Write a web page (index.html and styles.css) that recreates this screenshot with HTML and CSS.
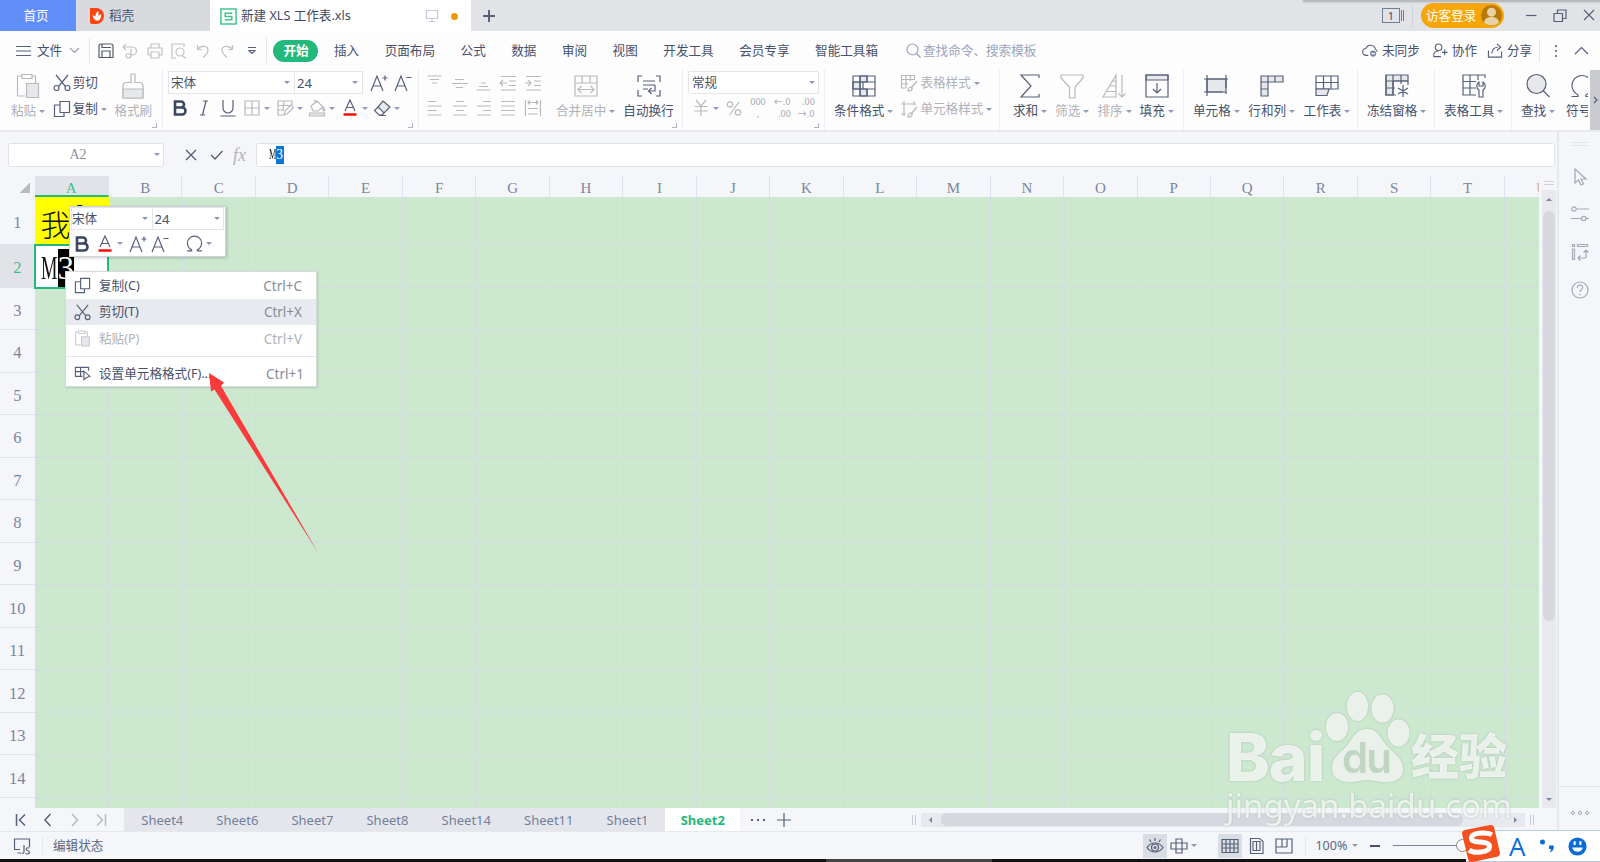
FILE: index.html
```html
<!DOCTYPE html>
<html lang="zh-CN">

<head>
    <meta charset="UTF-8">
    <meta name="viewport" content="width=device-width, initial-scale=1.0">
    <title>新建 XLS 工作表.xls</title>
    <link rel="stylesheet" href="styles.css">
</head>

<body>

    <!-- shared icons -->
    <svg class="sprite">
        <symbol id="cut" viewBox="0 0 18 18">
            <path d="M3 1l9.5 11.5M15 1L5.500 12.500" />
            <circle cx="3.500" cy="14" r="2.500" />
            <circle cx="14.500" cy="14" r="2.500" />
        </symbol>
        <symbol id="copy" viewBox="0 0 18 18">
            <path d="M7 1.500h9.500v11H7zM7 5H1.500v11.500H11v-4" />
        </symbol>
        <symbol id="paste" viewBox="0 0 24 26">
            <path d="M9 23H1.500V3H6m10 0h3.500v7M6 1.500h10v4H6z" />
            <path class="tint" d="M10.500 10.500h12v14h-12z" />
        </symbol>
        <symbol id="font-up" viewBox="0 0 18 18">
            <path d="M1 17L7 2l6 15M3 12h8M12.500 4h5M15 1.500v5" />
        </symbol>
        <symbol id="font-down" viewBox="0 0 18 18">
            <path d="M1 17L7 2l6 15M3 12h8M12.500 3.500h5" />
        </symbol>
        <symbol id="font-color" viewBox="0 0 16 18">
            <path d="M3 12L8 1l5 11M4.500 8.500h7" />
            <path class="red" d="M1.500 15.500h13" />
        </symbol>
        <symbol id="omega" viewBox="0 0 24 24">
            <path d="M1.500 22.500h6.500v-1.500C4 18.500 2 15.500 2 11.500a10 10 0 0 1 20 0c0 4-2 7-6 9.500v1.500h6.500" />
        </symbol>
    </svg>

    <div class="titlebar">
        <div class="tab home">首页</div>
        <div class="tab docer">
            <svg class="docer-logo" viewBox="0 0 14 16">
                <path d="M0 0h6a8 8 0 0 1 0 16H2a2 2 0 0 1-2-2z" fill="#fb4310" />
                <path d="M7.500 13C4 12 3 10 2.500 7l3 1.500C5 6 6.500 4 8.500 3v5l2.500-2c.5 3-.5 6-3.500 7z" fill="#fff" />
            </svg>
            <span>稻壳</span>
        </div>
        <div class="tab file">
            <svg class="xls-logo" viewBox="0 0 18 18">
                <path d="M1 1h16v16H1zM13 5.500H5.500V9h7v3.500H5" fill="none" stroke="#43c58b" stroke-width="1.600" />
            </svg>
            <span class="name">新建 XLS 工作表.xls</span>
            <svg class="icon monitor" viewBox="0 0 14 14"><path d="M1.500 1.500h11v8h-11zM7 9.500V12M4 12.500h6" /></svg>
            <i class="unsaved"></i>
        </div>
        <svg class="icon new-tab" viewBox="0 0 12 12"><path d="M6 0v12M0 6h12" /></svg>
        <div class="window-tools">
            <div class="doc-count"><span>1</span><i></i><i></i></div>
            <div class="login">
                <span>访客登录</span>
                <svg viewBox="0 0 22 22">
                    <circle cx="11" cy="11" r="11" fill="#b57a08" />
                    <circle cx="11" cy="7.500" r="4.700" fill="#e9d3a5" />
                    <path d="M3 18c1-4 4-5.500 8-5.500s7 1.500 8 5.500a11 11 0 0 1-16 0z" fill="#e9d3a5" />
                </svg>
            </div>
            <svg class="icon win" viewBox="0 0 14 14"><path d="M2 6.500h10.500" /></svg>
            <svg class="icon win" viewBox="0 0 14 14"><path d="M1 4.500h8.500v8H1zM4.500 4.500V1H13v8.500H9.500" /></svg>
            <svg class="icon win" viewBox="0 0 14 14"><path d="M2 1l10 10M12 1L2 11" /></svg>
        </div>
        <div class="top-shadow"></div>
    </div>

    <div class="menubar">
        <div class="file-menu">
            <svg class="icon burger" viewBox="0 0 15 12"><path d="M0 1.500h15M0 6h15M0 10.500h15" /></svg>
            <span>文件</span>
            <svg class="icon chevron" viewBox="0 0 11 7"><path d="M1 1l4.500 4.500L10 1" /></svg>
        </div>
        <div class="quick">
            <svg class="icon dark" viewBox="0 0 16 16"><path d="M1 14.500V3q0-2 2-2h10q2 0 2 2v11.500zM4 14.500V8h8v6.500M4 1v3.500h9" /></svg>
            <svg class="icon" viewBox="0 0 16 16"><path d="M1 4h9.500a4 4 0 0 1 0 8H9M4 1L1 4l3 3M9 6v7c0 1-1 2-2.500 2S4 14 4 12.500 5 11 9 11" /></svg>
            <svg class="icon" viewBox="0 0 16 16"><path d="M4 5V1h8v4M3.500 12H1V5h14v7h-2.500M4 9h8v6H4z" /></svg>
            <svg class="icon" viewBox="0 0 16 16"><path d="M5 15H1V1h12v3M11 12.500l4 3" /><circle cx="9" cy="9" r="4" /></svg>
            <svg class="icon" viewBox="0 0 16 16"><path d="M2.500 2v4.500H7M2.500 6.500C6 2 13 2.500 13 7.500c0 3-2.500 4.500-5 7" /></svg>
            <svg class="icon" viewBox="0 0 16 16"><path d="M13.500 2v4.500H9M13.500 6.500C10 2 3 2.500 3 7.500c0 3 2.500 4.500 5 7" /></svg>
        </div>
        <svg class="icon more" viewBox="0 0 8 9"><path d="M0 1.500h8M1 4.500l3 3 3-3z" /></svg>
        <div class="menu">
            <span class="active">开始</span>
            <span>插入</span>
            <span>页面布局</span>
            <span>公式</span>
            <span>数据</span>
            <span>审阅</span>
            <span>视图</span>
            <span>开发工具</span>
            <span>会员专享</span>
            <span>智能工具箱</span>
        </div>
        <div class="search">
            <svg class="icon" viewBox="0 0 15 15"><circle cx="6.500" cy="6.500" r="5.500" /><path d="M10.500 10.500l4 4" /></svg>
            <span>查找命令、搜索模板</span>
        </div>
        <div class="share">
            <svg class="icon" viewBox="0 0 18 16"><path d="M7 13.500H5a4 4 0 0 1-.5-8 5.500 5.500 0 0 1 10.500 1c1.500.5 2 1.500 2 3" /><circle class="solid" cx="12.500" cy="11.500" r="3.500" /><path class="white" d="M10.500 11.500h4" /></svg>
            <span>未同步</span>
            <svg class="icon collab" viewBox="0 0 16 16"><circle cx="6.500" cy="4.500" r="3.500" /><path d="M9 14.500H1.500c-1-3.500 1-6 5-6M13 7v6M10 10h6" /></svg>
            <span>协作</span>
            <svg class="icon out" viewBox="0 0 16 16"><path d="M1 8v7h14V9M4.500 11C5 7 7 4.500 11 4.500M10 1l4 3.500L10 8" /></svg>
            <span>分享</span>
        </div>
        <div class="dots-v"><i></i><i></i><i></i></div>
        <svg class="icon collapse" viewBox="0 0 15 9"><path d="M1 8l6.500-6.500L14 8" /></svg>
    </div>

    <div class="ribbon">
        <div class="group clipboard">
            <div class="big off">
                <svg class="icon" viewBox="0 0 24 26"><use href="#paste" /></svg>
                <span class="drop">粘贴</span>
            </div>
            <div class="stack">
                <div class="small"><svg class="icon" viewBox="0 0 18 18"><use href="#cut" /></svg><span>剪切</span></div>
                <div class="small"><svg class="icon" viewBox="0 0 18 18"><use href="#copy" /></svg><span class="drop">复制</span></div>
            </div>
            <div class="big off">
                <svg class="icon" viewBox="0 0 24 26"><path d="M10 1h4v8.500h5q3 0 3 4V25H2V13.500q0-4 3-4h5z" /><path class="tint" d="M2 16h20v9H2z" /></svg>
                <span>格式刷</span>
            </div>
            <i class="corner"></i>
        </div>

        <div class="group font">
            <div class="row">
                <div class="select family">宋体</div>
                <div class="select size">24</div>
                <svg class="icon" viewBox="0 0 18 18"><use href="#font-up" /></svg>
                <svg class="icon" viewBox="0 0 18 18"><use href="#font-down" /></svg>
            </div>
            <div class="row marks">
                <svg class="icon bold" viewBox="0 0 18 18"><path d="M4 2.500h6a3 3 0 0 1 0 6H4zM4 8.500h7a3.300 3.300 0 0 1 0 7H4z" /></svg>
                <svg class="icon" viewBox="0 0 18 18"><path d="M8 2h5M5 16h5M11 2L7.500 16" /></svg>
                <svg class="icon" viewBox="0 0 18 18"><path d="M4 1v8a5 5 0 0 0 10 0V1M1.500 17h15" /></svg>
                <span class="drop off"><svg class="icon" viewBox="0 0 18 18"><path d="M2 2h14v14H2zM9 2v14M2 9h14" /></svg></span>
                <span class="drop off"><svg class="icon" viewBox="0 0 18 18"><path d="M7 16H2V2h14v4M2 6.500h14M2 11h6M8 2l-1 9M8 16l1-4 6-6 2.500 2.500-6 6z" /></svg></span>
                <span class="drop off"><svg class="icon" viewBox="0 0 18 18"><path d="M3 7l6-5 6 6-5 4H5zM6 1l3 3M15 8c2 2 2 4 1 4s-1.500-2-1-4" /><path class="tint" d="M1.500 14h15v3h-15z" /></svg></span>
                <span class="drop"><svg class="icon" viewBox="0 0 16 18"><use href="#font-color" /></svg></span>
                <span class="drop"><svg class="icon" viewBox="0 0 18 18"><path class="tint" d="M10 2l7 6-6 6-6-6z" /><path d="M5 8l-3.500 3.500L6 16h3l2-2M6 16.500h7" /></svg></span>
            </div>
            <i class="corner"></i>
        </div>

        <div class="group align">
            <div class="align-grid off">
                <svg class="icon" viewBox="0 0 18 18"><path d="M1.500 2h14M4 5.500h9M6 9h5" /></svg>
                <svg class="icon" viewBox="0 0 18 18"><path d="M4 5.500h9M1 9.500h16M5 13.500h7" /></svg>
                <svg class="icon" viewBox="0 0 18 18"><path d="M6 9h5M4 12.500h9M1.500 16h14" /></svg>
                <svg class="icon" viewBox="0 0 18 18"><path d="M2 2.500h15M10 7h7M10 11.500h7M2 16h15M1 9h7M4 6L1 9l3 3" /></svg>
                <svg class="icon" viewBox="0 0 18 18"><path d="M2 2.500h15M10 7h7M10 11.500h7M2 16h15M1 9h6M4 6l3 3-3 3" /></svg>
                <svg class="icon" viewBox="0 0 18 18"><path d="M1.500 2.500h9M1.500 7h14M1.500 11.500h9M1.500 16h14" /></svg>
                <svg class="icon" viewBox="0 0 18 18"><path d="M5 2.500h8M2 7h14M5 11.500h8M2 16h14" /></svg>
                <svg class="icon" viewBox="0 0 18 18"><path d="M8 2.500h8M2 7h14M8 11.500h8M2 16h14" /></svg>
                <svg class="icon" viewBox="0 0 18 18"><path d="M2 2.500h14M2 7h14M2 11.500h14M2 16h14" /></svg>
                <svg class="icon" viewBox="0 0 18 18"><path d="M1.500 1v16M16.500 1v16M4 3.500h10M6 1.500l-2 2 2 2M12 1.500l2 2-2 2M4 9.500h10M4 15h10" /></svg>
            </div>
            <div class="big off">
                <svg class="icon" viewBox="0 0 24 26"><path d="M1 3h22v20H1zM1 10h22M8 3v7M16 3v7M4 16.500h16M7.500 13L4 16.500 7.500 20M16.500 13l3.500 3.500-3.500 3.500" /></svg>
                <span class="drop">合并居中</span>
            </div>
            <div class="big wrap">
                <svg class="icon" viewBox="0 0 24 26"><path d="M5 3H1v6M19 3h4v6M5 23H1v-6M19 23h4v-6M6 8h12M6 12h12M6 16h5M18 12v6h-6M14.500 15l-3 3 3 3" /></svg>
                <span>自动换行</span>
            </div>
            <i class="corner"></i>
        </div>

        <div class="group number">
            <div class="select format">常规</div>
            <div class="row off">
                <span class="drop"><svg class="icon" viewBox="0 0 18 18"><path d="M4 1l5 6 5-6M2.500 7.500h13M2.500 12h13M9 7v10" /></svg></span>
                <svg class="icon" viewBox="0 0 18 18"><circle cx="5" cy="5.500" r="2.700" /><circle cx="13" cy="13.500" r="2.700" /><path d="M14 3L4.500 16" /></svg>
                <div class="digits"><b>000</b><b>,</b></div>
                <div class="digits"><b>←.0</b><b class="end">.00</b></div>
                <div class="digits"><b class="end">.00</b><b>→.0</b></div>
            </div>
            <i class="corner"></i>
        </div>

        <div class="group styles">
            <div class="big">
                <svg class="icon" viewBox="0 0 24 26"><path class="tint" d="M8 3h7v6H8zM1 9h7v7H1zM8 16h7v7H8z" /><path d="M1 3h22v20H1zM1 9h22M1 16h22M8 3v13M15 16v7M15 3v6M11 9v7M8 16v7" /></svg>
                <span class="drop">条件格式</span>
            </div>
            <div class="stack off">
                <div class="small"><svg class="icon" viewBox="0 0 18 18"><path d="M6 14H1.500V1.500h13V6M1.500 5.500h13M1.500 10H8M6 1.500V14M10.500 1.500V7M17 7l-6 7M8 17c0-3 1-4 3-4s2 4-3 4z" /></svg><span class="drop">表格样式</span></div>
                <div class="small"><svg class="icon" viewBox="0 0 18 18"><path d="M4 1v15M1 4h15M1 14h5M14 1v4M17 7l-6 7M8 17c0-3 1-4 3-4s2 4-3 4z" /></svg><span class="drop">单元格样式</span></div>
            </div>
        </div>

        <div class="group edit">
            <div class="big">
                <svg class="icon" viewBox="0 0 24 26"><path d="M21 5V2H3l10 11L3 24h18v-3" /></svg>
                <span class="drop">求和</span>
            </div>
            <div class="big off">
                <svg class="icon" viewBox="0 0 24 26"><path d="M1 2h22v3l-8 9v11H9.500V14L1 5z" /></svg>
                <span class="drop">筛选</span>
            </div>
            <div class="big off">
                <svg class="icon" viewBox="0 0 24 26"><path d="M14 2v22H1zM14 8h-3.500M14 13H8M14 18.500H5M20 2v22M16.500 20.500L20 24l3.500-3.500" /></svg>
                <span class="drop">排序</span>
            </div>
            <div class="big">
                <svg class="icon" viewBox="0 0 24 26"><path class="tint" d="M1 2h22v5H1z" /><path d="M1 2h22v22H1zM12 10v10M8 16l4 4 4-4" /></svg>
                <span class="drop">填充</span>
            </div>
        </div>

        <div class="group cells">
            <div class="big">
                <svg class="icon" viewBox="0 0 24 26"><path class="tint" d="M3 6h19v13H3z" /><path d="M3 2v21M22 2v13M0 6h24M0 19h19M22 19v2" /></svg>
                <span class="drop">单元格</span>
            </div>
            <div class="big">
                <svg class="icon" viewBox="0 0 24 26"><path class="tint" d="M1 3h22v6H8v14H1z" /><path d="M8 3v6H1M15 3v6M1 16h7" /></svg>
                <span class="drop">行和列</span>
            </div>
            <div class="big">
                <svg class="icon" viewBox="0 0 24 26"><path d="M1 3h22v13H1zM1 9.500h22M8.500 3v13M16 3v13" /><path class="tint" d="M1 16h13l-2 6.500H1z" /></svg>
                <span class="drop">工作表</span>
            </div>
        </div>

        <div class="group freeze">
            <div class="big">
                <svg class="icon" viewBox="0 0 24 26"><path class="tint" d="M1 2h22v6H8v14H1z" /><path d="M23 8v4M11 22H1V2M8 2v20M16 2v9M1 8h22M1 15h9M18 12v12M13 15l10 6M23 15l-10 6" /></svg>
                <span class="drop">冻结窗格</span>
            </div>
        </div>
        <div class="group freeze">
            <div class="big">
                <svg class="icon" viewBox="0 0 24 26"><path d="M14 22H1V2h22v3M8 2v20M16 2v5M1 8.500h13M1 15h13M17 24v-7c-3-2-3-6 0-8v4h4V9c3 2 3 6 0 8v7z" /></svg>
                <span class="drop">表格工具</span>
            </div>
        </div>
        <div class="group find">
            <div class="big">
                <svg class="icon" viewBox="0 0 24 26"><circle class="tint" cx="10.500" cy="11" r="9.500" /><path d="M17.500 18l6 6" /></svg>
                <span class="drop">查找</span>
            </div>
            <div class="big symbol">
                <svg class="icon" viewBox="0 0 24 24"><use href="#omega" /></svg>
                <span>符号</span>
            </div>
        </div>
        <div class="ribbon-next"><svg class="icon" viewBox="0 0 5 8"><path d="M1 1l3 3-3 3" /></svg></div>
    </div>

    <div class="main">
        <div class="workspace">
            <div class="formula-bar">
                <div class="name-box"><span>A2</span></div>
                <svg class="icon" viewBox="0 0 12 12"><path d="M1 1l10 10M11 1L1 11" /></svg>
                <svg class="icon check" viewBox="0 0 13 12"><path d="M1 6l4 4 7.500-8" /></svg>
                <span class="fx">fx</span>
                <div class="formula"><span class="m">M</span><mark>3</mark></div>
            </div>

            <div class="sheet-area">
                <div class="sheet">
                    <div class="columns">
                        <div class="select-all"></div>
                        <div class="col selected">A</div>
                        <div class="col">B</div>
                        <div class="col">C</div>
                        <div class="col">D</div>
                        <div class="col">E</div>
                        <div class="col">F</div>
                        <div class="col">G</div>
                        <div class="col">H</div>
                        <div class="col">I</div>
                        <div class="col">J</div>
                        <div class="col">K</div>
                        <div class="col">L</div>
                        <div class="col">M</div>
                        <div class="col">N</div>
                        <div class="col">O</div>
                        <div class="col">P</div>
                        <div class="col">Q</div>
                        <div class="col">R</div>
                        <div class="col">S</div>
                        <div class="col">T</div>
                        <div class="col last">U</div>
                    </div>
                    <div class="body">
                        <div class="rows">
                            <div class="first">1</div>
                            <div class="selected">2</div>
                            <div>3</div>
                            <div>4</div>
                            <div>5</div>
                            <div>6</div>
                            <div>7</div>
                            <div>8</div>
                            <div>9</div>
                            <div>10</div>
                            <div>11</div>
                            <div>12</div>
                            <div>13</div>
                            <div>14</div>
                        </div>
                        <div class="grid">
                            <div class="cell a1">我<sup>-</sup></div>
                            <div class="cell a2"><span class="m">M</span><mark>3</mark></div>
                        </div>
                    </div>
                </div>
                <div class="vscroll">
                    <div class="splitter"></div>
                    <div class="track">
                        <i class="up"></i>
                        <div class="thumb"></div>
                        <i class="down"></i>
                    </div>
                </div>
            </div>

            <div class="sheet-bar">
                <div class="nav">
                    <svg class="icon" viewBox="0 0 12 14"><path d="M1.500 1v12M10 1.500L4.500 7l5.500 5.500" /></svg>
                    <svg class="icon" viewBox="0 0 12 14"><path d="M8.500 1L3 7l5.500 6" /></svg>
                    <svg class="icon off" viewBox="0 0 12 14"><path d="M3 1l5.500 6L3 13" /></svg>
                    <svg class="icon off" viewBox="0 0 12 14"><path d="M1 1.500L6.500 7 1 12.500M9.500 1v12" /></svg>
                </div>
                <div class="sheets">
                    <span>Sheet4</span>
                    <span>Sheet6</span>
                    <span>Sheet7</span>
                    <span>Sheet8</span>
                    <span>Sheet14</span>
                    <span>Sheet11</span>
                    <span>Sheet1</span>
                    <span class="current">Sheet2</span>
                </div>
                <div class="dots-h"><i></i><i></i><i></i></div>
                <svg class="icon add" viewBox="0 0 14 14"><path d="M7 0v14M0 7h14" /></svg>
                <div class="hscroll">
                    <i class="handle"></i>
                    <div class="htrack"><i class="left"></i><div class="thumb"></div><i class="right"></i></div>
                    <i class="handle"></i>
                </div>
            </div>
        </div>

        <div class="side-panel">
            <div class="grip"></div>
            <svg class="icon" viewBox="0 0 18 18"><path d="M4 1v14l3.500-3 2.500 5 2.500-1.200L10 11h5z" /></svg>
            <svg class="icon" viewBox="0 0 18 18"><path d="M5.500 4H18M0 13.500h10.500M15 13.500h3" /><circle cx="3" cy="4" r="2.200" /><circle cx="12.800" cy="13.500" r="2.200" /></svg>
            <svg class="icon" viewBox="0 0 18 18"><path d="M1.500 1.500h2v2h-2zM6.500 1.500h10v2h-10zM1.500 6h2v10.500h-2zM15 15H7M9.500 12.500L7 15l2.500 2.500M15 15V7M12.500 9.500L15 7l2.500 2.500" /></svg>
            <svg class="icon" viewBox="0 0 18 18"><circle cx="9" cy="9" r="8" /><path d="M6.200 7c0-4 6-3.500 5.500-.3C11.500 8.500 9 8.800 9 11M9 12.800v1.400" /></svg>
            <div class="more-tools"><i></i><i></i><i></i></div>
        </div>
    </div>

    <div class="statusbar">
        <svg class="icon macro" viewBox="0 0 18 18"><path d="M7 12.500H1.500V2h15v8M4.500 16H8M11 8v6.500c0 2-1 2-2.500 1.500M16.500 11c-4-1-4 2-2 2.500s3 3 0 3.500l-2-.5" /></svg>
        <span class="state">编辑状态</span>
        <div class="views">
            <div class="view on"><svg class="icon" viewBox="0 0 18 18"><path d="M1 10.500C5 4.500 13 4.500 17 10.500 13 16.500 5 16.500 1 10.500zM9 1v3M3.500 2.500L5 5M14.500 2.500L13 5" /><circle cx="9" cy="10.500" r="3.500" /><circle cx="9" cy="10.500" r="1" /></svg></div>
            <span class="drop"><svg class="icon" viewBox="0 0 18 18"><path d="M6 2h6v14H6zM1 6h16v6H1z" /></svg></span>
            <div class="view on table"><svg class="icon" viewBox="0 0 18 18"><path d="M1 2.500h16v13H1zM1 7h16M1 11h16M5 2.500v13M9 2.500v13M13 2.500v13" /></svg></div>
            <svg class="icon" viewBox="0 0 18 18"><path d="M2.500 1.500h9l3.500 3v12H2.500zM5 4.500h3.500v9H5zM8.500 4.500H12v9H8.500" /></svg>
            <svg class="icon" viewBox="0 0 18 18"><path d="M1 2h16v14H1zM7 2v8M12 2v8M1 10h11" /></svg>
            <span class="drop zoom">100%</span>
            <i class="minus"></i>
            <div class="slider"><i></i></div>
        </div>
        <div class="ime">
            <span>A</span>
            <svg class="comma" viewBox="0 0 16 16"><circle cx="3.500" cy="4" r="2.500" fill="#0a6cd6" /><path d="M10 7.500h4.500c1 3-.5 6-4 7 1-1.200 1.500-2.200 1.300-3.500H10z" fill="#0a6cd6" /></svg>
            <svg class="smile" viewBox="0 0 20 20"><circle cx="10" cy="10" r="9.500" fill="#0a6cd6" /><path d="M7 4.500v4M13 4.500v4" stroke="#fff" stroke-width="2.200" /><path d="M4.500 11h11c-.5 6-10.500 6-11 0z" fill="#fff" /></svg>
        </div>
        <svg class="sogou" viewBox="0 0 40 38">
            <path d="M4 6l25-5q3-.5 4 2l6 26q0 3-2 3.500L12 38q-4 1-5-3L1 9.500Q1 6.500 4 6z" fill="#f4511e" />
            <path d="M31 10.500C25 8 9 8 10.500 15c1.500 5 18 1 18 7.500S12 29.500 8 26" fill="none" stroke="#fff" stroke-width="5" />
        </svg>
    </div>
    <div class="bottom-edge"></div>

    <!-- floating font toolbar -->
    <div class="mini-toolbar">
        <div class="row">
            <div class="select family">宋体</div>
            <div class="select size">24</div>
        </div>
        <div class="row tools">
            <svg class="icon bold" viewBox="0 0 18 18"><path d="M4 2.500h6a3 3 0 0 1 0 6H4zM4 8.500h7a3.300 3.300 0 0 1 0 7H4z" /></svg>
            <span class="drop"><svg class="icon" viewBox="0 0 16 18"><use href="#font-color" /></svg></span>
            <svg class="icon" viewBox="0 0 18 18"><use href="#font-up" /></svg>
            <svg class="icon" viewBox="0 0 18 18"><use href="#font-down" /></svg>
            <span class="drop omega"><svg class="icon" viewBox="0 0 24 24"><use href="#omega" /></svg></span>
        </div>
    </div>

    <div class="context-menu">
        <div class="item"><svg class="icon" viewBox="0 0 18 18"><use href="#copy" /></svg><span>复制(C)</span><kbd>Ctrl+C</kbd></div>
        <div class="item hover"><svg class="icon" viewBox="0 0 18 18"><use href="#cut" /></svg><span>剪切(T)</span><kbd>Ctrl+X</kbd></div>
        <div class="item off"><svg class="icon" viewBox="0 0 24 26"><use href="#paste" /></svg><span>粘贴(P)</span><kbd>Ctrl+V</kbd></div>
        <hr>
        <div class="item cell-format"><svg class="icon" viewBox="0 0 18 18"><path d="M9 12H1.500V2.500h14V6M1.500 7H10M7 2.500V12M10.500 6.500v9l2.500-2 4-1.500z" /></svg><span>设置单元格格式(F)...</span><kbd>Ctrl+1</kbd></div>
    </div>

    <svg class="arrow" viewBox="0 0 112 184">
        <path d="M0 0L15 9.500l-3 3.500L109 179.500 5.500 16.500 2 18.500z" fill="#fb3b3b" />
    </svg>

    <div class="watermark">
        <div class="brand">
            <span class="bai">Bai</span>
            <svg viewBox="0 0 86 94">
                <ellipse cx="13" cy="37" rx="11" ry="14" />
                <ellipse cx="33.500" cy="16.500" rx="10.500" ry="14.500" />
                <ellipse cx="58.500" cy="18.500" rx="11" ry="14" />
                <ellipse cx="74.500" cy="43" rx="11" ry="13.500" />
                <path d="M43 39c10 0 13 8 18 15s18 13 18 25c0 10-8 13-18 13-7 0-11-2-18-2s-10 2-17 2C16 92 8 88 8 78c0-12 12-17 17-25 5-7 8-14 18-14z" />
                <text x="18" y="83">du</text>
            </svg>
            <span class="jy">经验</span>
        </div>
        <div class="url">jingyan.baidu.com</div>
    </div>

</body>

</html>
```
FILE: styles.css
```css
* {
    box-sizing: border-box;
}

body {
    margin: 0;
    width: 1600px;
    height: 862px;
    overflow: hidden;
    position: relative;
    font-family: "Noto Sans", "Noto Sans CJK SC", sans-serif;
    font-size: 12.6px;
    line-height: 18px;
    color: #46516b;
    background-color: #f5f6f9;
    white-space: nowrap;
}

.sprite {
    display: none;
}

.icon {
    display: block;
    flex: none;
    width: 18px;
    height: 18px;
    fill: none;
    stroke: #566179;
    stroke-width: 1.2;
}

.icon .tint,
symbol .tint {
    fill: #e6e8ec;
}

.red {
    stroke: #ff0000;
    stroke-width: 2.4;
}

.bold {
    stroke: #3b4660;
    stroke-width: 2.6;
}

.off {
    color: #b0b2b7;
}

.off .icon,
.icon.off {
    stroke: #b9babd;
}

/* small caret after a label */
.drop {
    display: flex;
    align-items: center;
}

.drop::after,
.select::after,
.name-box::after {
    content: "";
    margin-left: 3px;
    border: 3px solid transparent;
    border-top: 3px solid #8e9ab3;
    border-bottom: 0;
}

.row {
    display: flex;
    align-items: center;
}

/* title bar */
.titlebar {
    display: flex;
    align-items: center;
    height: 31px;
    background-color: #e1e3e7;
    position: relative;
}

.tab {
    display: flex;
    align-items: center;
    height: 31px;
    padding-top: 1px;
}

.home {
    width: 76px;
    justify-content: center;
    padding-right: 4px;
    background-color: #608ffb;
    color: #fff;
}

.docer {
    width: 134px;
    padding-left: 13px;
    gap: 5px;
    background-color: #d8dade;
    border-left: 1px solid #e1e3e7;
}

.docer-logo {
    width: 14px;
    height: 16px;
}

.file {
    width: 261px;
    padding-left: 10px;
    background-color: #fff;
}

.xls-logo {
    width: 17px;
    height: 17px;
    margin-right: 4px;
}

.file .name {
    width: 184px;
    color: #3f4960;
}

.monitor {
    width: 14px;
    height: 14px;
    stroke: #c3c9dc;
}

.unsaved {
    width: 7px;
    height: 7px;
    margin-left: 12px;
    border-radius: 50%;
    background-color: #ec9a09;
}

.new-tab {
    width: 12px;
    height: 12px;
    margin-left: 12px;
    stroke-width: 2;
}

.window-tools {
    display: flex;
    align-items: center;
    height: 31px;
    margin-left: auto;
}

.doc-count {
    display: flex;
    align-items: center;
    gap: 1px;
    height: 22px;
    padding-right: 8px;
    margin-right: 8px;
    border-right: 1px solid #d0d3d9;
}

.doc-count span {
    width: 18px;
    height: 15px;
    border: 1px solid #737e95;
    font-size: 11px;
    line-height: 13px;
    text-align: center;
}

.doc-count i {
    width: 1px;
    height: 11px;
    background-color: #737e95;
}

.login {
    display: flex;
    align-items: center;
    justify-content: space-between;
    width: 83px;
    height: 25px;
    padding: 0 2px 0 5px;
    margin-right: 20px;
    border-radius: 13px;
    background-color: #f7a60a;
    color: #fff;
}

.login svg {
    width: 21px;
    height: 21px;
}

.win {
    width: 14px;
    height: 14px;
    margin-right: 15px;
}

.win:last-child {
    margin-right: 4px;
}

.top-shadow {
    position: absolute;
    right: 0;
    top: 0;
    width: 297px;
    height: 2px;
    background-color: #b9babc;
    box-shadow: 0 0 3px #b9babc;
}

/* menu bar */
.menubar {
    display: flex;
    align-items: center;
    height: 38px;
    padding-top: 1px;
    background-color: #fdfdfe;
}

.file-menu {
    display: flex;
    align-items: center;
    width: 90px;
    height: 25px;
    padding-left: 16px;
    border-right: 1px solid #e4e6ea;
}

.burger {
    width: 15px;
    height: 12px;
    margin-right: 6px;
}

.chevron {
    width: 11px;
    height: 7px;
    margin-left: 7px;
    stroke: #9aa1ae;
}

.quick {
    display: flex;
    gap: 8.3px;
    margin-left: 8px;
}

.quick .icon {
    width: 16px;
    height: 16px;
    stroke: #c1c2c5;
}

.quick .dark {
    stroke: #555b66;
}

.more {
    width: 8px;
    height: 9px;
    margin-left: 13px;
}

.menu {
    display: flex;
    align-items: center;
    height: 25px;
    margin-left: 10px;
    padding-left: 6px;
    border-left: 1px solid #e4e6ea;
    gap: 25.5px;
}

.menu .active {
    width: 45px;
    height: 22px;
    margin-right: -10px;
    border-radius: 11px;
    background-color: #23b87c;
    color: #fff;
    font-weight: bold;
    line-height: 22px;
    text-align: center;
}

.search {
    display: flex;
    align-items: center;
    gap: 2px;
    margin-left: 28px;
    color: #9aa5bb;
}

.search .icon {
    width: 15px;
    height: 15px;
    stroke: #9aa5bb;
}

.share {
    display: flex;
    align-items: center;
    gap: 4px;
    width: 178px;
    height: 22px;
    margin-left: auto;
    border-right: 1px solid #e4e6ea;
}

.share .icon {
    width: 16px;
    height: 15px;
}

.share .collab {
    margin-left: 8px;
}

.share .out {
    margin-left: 6px;
}

.icon .solid {
    fill: #7f8aa3;
    stroke: none;
}

.icon .white {
    stroke: #fff;
}

.dots-v {
    display: flex;
    flex-direction: column;
    gap: 3px;
    width: 2px;
    margin: 0 17px 0 15px;
}

.dots-v i {
    height: 2px;
    background-color: #7a8498;
}

.collapse {
    width: 15px;
    height: 9px;
    margin-right: 11px;
}

/* ribbon */
.ribbon {
    display: flex;
    height: 63px;
    overflow: hidden;
    background-color: #fdfdfe;
    border-bottom: 2px solid #e9eaed;
}

.group {
    display: flex;
    flex: none;
    position: relative;
    padding-top: 3px;
    border-right: 1px solid #eeeff2;
}

.corner {
    position: absolute;
    right: 5px;
    bottom: 2px;
    width: 5px;
    height: 5px;
    border-right: 1.5px solid #aab1bf;
    border-bottom: 1.5px solid #aab1bf;
}

.big {
    display: flex;
    flex: none;
    flex-direction: column;
    align-items: center;
    gap: 3px;
}

.big .icon {
    width: 24px;
    height: 26px;
    margin-top: 1px;
}

.stack {
    display: flex;
    flex-direction: column;
    gap: 8px;
    padding-top: 2px;
}

.small {
    display: flex;
    align-items: center;
    gap: 2px;
}

.clipboard {
    width: 163px;
    padding-left: 11px;
    gap: 7.5px;
}

.select {
    display: flex;
    align-items: center;
    justify-content: space-between;
    height: 23px;
    padding: 0 4px 0 2px;
    border: 1px solid #e3e5e8;
    background-color: #fff;
}

.font,
.number {
    flex-direction: column;
    padding-top: 2px;
    gap: 5px;
}

.font {
    width: 256px;
    padding-left: 5px;
}

.family {
    width: 127px;
}

.size {
    width: 69px;
    margin-left: -1px;
    font-size: 13px;
}

.font .size + .icon {
    margin: 0 6px 0 7px;
}

.marks > .icon {
    margin: 0 3px;
}

.marks .drop {
    width: 32.6px;
    padding-left: 3px;
}

.align {
    width: 264px;
    padding-left: 4px;
}

.align-grid {
    display: grid;
    grid-template-columns: repeat(5, 24.4px);
    grid-template-rows: 25px 25px;
    justify-items: center;
    margin-right: 11px;
    padding-top: 2px;
}

.align .wrap {
    margin-left: 8px;
}

.number {
    width: 142px;
    padding-left: 5px;
    gap: 2px;
}

.format {
    width: 131px;
    padding: 0 3px;
    border-radius: 2px;
}

.number .drop {
    width: 37px;
    padding-left: 4px;
}

.digits {
    display: flex;
    flex-direction: column;
    width: 24px;
    font-size: 9px;
    line-height: 12px;
    text-align: center;
}

.digits b {
    font-weight: 500;
}

.number .row > .icon {
    margin-right: 3px;
}

.digits .end {
    padding-left: 5px;
}

.styles {
    width: 175px;
    padding-left: 9px;
    gap: 7px;
}

.edit {
    width: 184px;
    padding-left: 13px;
    gap: 8px;
}

.cells {
    width: 174px;
    padding-left: 9px;
    gap: 8.500px;
}

.freeze {
    width: 77px;
    padding-left: 9px;
}

.find {
    width: 76px;
    padding-left: 9px;
    gap: 8px;
    overflow: hidden;
    border: 0;
}

.symbol .icon {
    margin-left: 7px;
}

.ribbon-next {
    display: flex;
    align-items: center;
    justify-content: center;
    width: 10px;
    height: 60px;
    margin-top: 1px;
    margin-left: auto;
    background-color: #c9cbd1;
}

.ribbon-next .icon {
    width: 5px;
    height: 8px;
}

/* formula bar */
.main {
    display: flex;
    height: 700px;
}

.workspace {
    width: 1557px;
}

.formula-bar {
    display: flex;
    align-items: center;
    height: 44px;
    padding: 1px 0 0 8px;
}

.name-box {
    display: flex;
    align-items: center;
    width: 156px;
    height: 24px;
    margin-right: 21px;
    padding-right: 3px;
    border: 1px solid #e0e2e6;
    border-radius: 3px;
    background-color: #fff;
    color: #8d9097;
    font-family: "Liberation Serif", serif;
    font-size: 14px;
}

.name-box span {
    flex: 1;
    padding-right: 4px;
    text-align: center;
}

.formula-bar .icon {
    width: 12px;
    height: 12px;
    stroke-width: 1.4;
}

.formula-bar .check {
    width: 13px;
    margin-left: 13px;
}

.fx {
    width: 24px;
    margin-left: 10px;
    color: #b0b3b9;
    font-size: 18px;
    font-style: italic;
    font-family: "Liberation Serif", serif;
}

.formula {
    display: flex;
    align-items: center;
    width: 1299px;
    height: 24px;
    margin-left: -1px;
    padding-left: 12px;
    border: 1px solid #e0e2e6;
    border-radius: 3px;
    background-color: #fff;
    color: #222;
    font-family: "Liberation Serif", serif;
    font-size: 14px;
}

.formula .m {
    width: 7px;
    transform: scaleX(0.6);
    transform-origin: left;
}

.formula mark {
    width: 8px;
    height: 18px;
    background-color: #0a74d8;
    color: #fff;
}

/* sheet */
.sheet-area {
    display: flex;
    height: 632px;
}

.sheet {
    width: 1539px;
    overflow: hidden;
}

.columns {
    display: flex;
    height: 21px;
    font-family: "Liberation Serif", serif;
    font-size: 15px;
    color: #7a869f;
}

.select-all {
    flex: none;
    width: 34.500px;
    height: 21px;
    background: linear-gradient(135deg, transparent 50%, #b9babd 50%) 19px 6px / 11px 11px no-repeat;
}

.col {
    flex: none;
    width: 73.470px;
    height: 21px;
    padding-top: 3px;
    border-right: 1px solid #dfe1ee;
    text-align: center;
}

.col.selected {
    width: 74.470px;
    background-color: #e2e3e9;
    border-bottom: 2px solid #23b87c;
    color: #3fc08b;
}

.col.last {
    width: 35px;
    padding-left: 31px;
    overflow: hidden;
    border: 0;
    color: #d9b8a8;
    text-align: left;
}

.body {
    display: flex;
    height: 611px;
}

.rows {
    flex: none;
    width: 34.500px;
    font-family: "Liberation Serif", serif;
    font-size: 16.500px;
    color: #7a869f;
}

.rows div {
    display: flex;
    align-items: center;
    justify-content: center;
    height: 42.540px;
    padding-top: 5px;
    border-bottom: 1px solid #e0e3ec;
}

.rows .first {
    height: 48px;
}

.rows .selected {
    background-color: #e2e3e9;
    color: #3fc08b;
}

.grid {
    flex: 1;
    background-color: #cce8cf;
    background-image:
        repeating-linear-gradient(to right, transparent 0, transparent 72.470px, #d2dce1 72.470px, #d2dce1 73.470px),
        repeating-linear-gradient(to bottom, transparent 0, transparent 41.540px, #d2dce1 41.540px, #d2dce1 42.540px);
    background-position: 1px 0, 0 5.500px;
}

.cell {
    display: flex;
    width: 74px;
    overflow: hidden;
    color: #111;
}

.a1 {
    height: 47px;
    padding: 2px 0 0 6px;
    background-color: #ffff00;
    font-size: 30px;
    font-weight: 300;
    line-height: 52px;
}

.a1 sup {
    font-size: 20px;
    line-height: 10px;
    margin-left: 6px;
}

.a2 {
    width: 75px;
    height: 45px;
    margin-left: -1px;
    padding: 3px 0 0 5px;
    border: 2px solid #23b87c;
    background-color: #fff;
    font-family: "Liberation Serif", serif;
    font-size: 33px;
    line-height: 38px;
}

.a2 .m {
    width: 17px;
    transform: scaleX(0.56);
    transform-origin: left;
}

.a2 mark {
    width: 16px;
    height: 38px;
    background-color: #000;
    color: #fff;
}

.vscroll {
    display: flex;
    flex-direction: column;
    width: 14px;
    margin-left: 3px;
}

.splitter {
    height: 4px;
    margin: 5px 2px;
    border-top: 1px solid #cdd1da;
    border-bottom: 1px solid #cdd1da;
}

.track {
    display: flex;
    flex: 1;
    flex-direction: column;
    align-items: center;
    background-color: #e8e9ee;
}

.up,
.down {
    border: 3px solid transparent;
}

.up {
    margin-top: 8px;
    border-top: 0;
    border-bottom-color: #7a86a3;
}

.down {
    margin: auto 0 7px;
    border-bottom: 0;
    border-top-color: #7a86a3;
}

.vscroll .thumb {
    width: 12px;
    height: 410px;
    margin-top: 10px;
    border-radius: 6px;
    background-color: #d5d8df;
}

/* sheet tabs */
.sheet-bar {
    display: flex;
    align-items: center;
    height: 24px;
    border-bottom: 1px solid #e6e8ec;
}

.nav {
    display: flex;
    gap: 15px;
    width: 124px;
    padding-left: 15px;
}

.nav .icon {
    width: 12px;
    height: 14px;
    stroke-width: 1.5;
}

.sheets {
    display: flex;
    height: 23px;
    background-color: #e5e6ec;
    color: #71809b;
    font-size: 13px;
    line-height: 24px;
}

.sheets span {
    padding: 0 15.800px 0 17.300px;
}

.sheets .current {
    width: 75px;
    margin-left: 1px;
    padding: 0;
    background-color: #fff;
    color: #23b87c;
    font-weight: bold;
    text-align: center;
}

.dots-h {
    display: flex;
    gap: 4px;
    margin-left: 11px;
}

.dots-h i {
    width: 2px;
    height: 2px;
    background-color: #566179;
}

.add {
    width: 14px;
    height: 14px;
    margin-left: 12px;
}

.hscroll {
    display: flex;
    align-items: center;
    gap: 5px;
    margin-left: auto;
    padding-right: 23px;
}

.handle {
    width: 4px;
    height: 10px;
    border-left: 1px solid #c6cad3;
    border-right: 1px solid #c6cad3;
}

.htrack {
    display: flex;
    align-items: center;
    justify-content: space-between;
    width: 604px;
    height: 14px;
    padding: 0 8px;
    background-color: #e8e9ee;
}

.htrack .thumb {
    width: 522px;
    height: 13px;
    margin: 0 auto 0 9px;
    border-radius: 6px;
    background-color: #d5d8df;
}

.left,
.right {
    border: 3px solid transparent;
}

.left {
    border-left: 0;
    border-right-color: #7a86a3;
}

.right {
    border-right: 0;
    border-left-color: #7a86a3;
}

/* side panel */
.side-panel {
    display: flex;
    flex-direction: column;
    align-items: center;
    width: 43px;
    gap: 19.700px;
    border-left: 2px solid #e6e8ec;
}

.side-panel .icon {
    stroke: #a3a9b6;
}

.grip {
    width: 17px;
    height: 4px;
    margin: 10px 0 2px;
    border-top: 1px solid #e2e4e9;
    border-bottom: 1px solid #e2e4e9;
}

.more-tools {
    display: flex;
    justify-content: center;
    gap: 3px;
    width: 41px;
    margin-top: auto;
    padding: 24px 0 17px;
    border-top: 1px solid #e2e4e9;
}

.more-tools i {
    width: 4px;
    height: 4px;
    border: 1px solid #a3a9b6;
    border-radius: 50%;
}

/* status bar */
.statusbar {
    display: flex;
    align-items: center;
    height: 27px;
    position: relative;
}

.macro {
    margin-left: 13px;
}

.state {
    margin-left: 11px;
    padding-left: 10px;
    border-left: 1px solid #e6e8ec;
    color: #5c6880;
}

.views {
    display: flex;
    align-items: center;
    margin-left: 1040px;
}

.view {
    display: flex;
    align-items: center;
    justify-content: center;
    width: 24px;
    height: 24px;
}

.on {
    background-color: #d9dde4;
}

.views > .drop:not(.zoom) {
    margin-left: 3px;
}

.views .table {
    margin-left: 21px;
}

.views > .icon {
    margin-left: 6px;
}

.views .table + .icon + .icon {
    margin-left: 9px;
}

.zoom {
    margin-left: 12px;
    padding-left: 9px;
    border-left: 1px solid #e6e8ec;
    color: #5c6880;
}

.zoom::after {
    margin-left: 5px;
}

.minus {
    width: 10px;
    height: 2px;
    margin-left: 12px;
    background-color: #46516b;
}

.slider {
    display: flex;
    align-items: center;
    justify-content: flex-end;
    width: 76px;
    height: 1px;
    margin-left: 13px;
    background-color: #7a8498;
}

.slider i {
    flex: none;
    width: 13px;
    height: 13px;
    border: 1px solid #888;
    border-radius: 50%;
    background-color: #fff;
}

.ime {
    display: flex;
    align-items: center;
    position: absolute;
    right: 0;
    top: -2px;
    width: 134px;
    height: 32px;
    padding-left: 43px;
    border-top: 1px solid #b9cce6;
    border-bottom: 1px solid #b9cce6;
    background-color: #fff;
    color: #0a6cd6;
    font-family: "Open Sans", sans-serif;
    font-size: 26px;
    z-index: 2;
}

.comma {
    width: 16px;
    height: 16px;
    margin-left: 14px;
}

.smile {
    width: 19px;
    height: 19px;
    margin-left: 13px;
}

.sogou {
    position: absolute;
    left: 1461px;
    top: -8px;
    width: 40px;
    height: 38px;
    z-index: 3;
}

.bottom-edge {
    height: 3px;
    background: linear-gradient(to right, #111 826px, #444 826px, #444 992px, #111 992px);
}

/* floating toolbar */
.mini-toolbar {
    position: absolute;
    left: 69px;
    top: 206px;
    width: 157px;
    height: 51px;
    padding: 0 1px;
    border: 1px solid #cfd4da;
    background-color: #fff;
    box-shadow: 1px 1px 3px rgba(0, 0, 0, 0.2);
}

.mini-toolbar .family {
    width: 83px;
    padding-left: 0;
}

.mini-toolbar .size {
    width: 72px;
    padding: 0 3px 0 1px;
}

.tools {
    height: 27px;
    padding-left: 2px;
}

.tools .drop {
    margin: 0 6px 0 5px;
}

.tools > .icon + .icon {
    margin-left: 4px;
}

.tools .omega {
    margin-left: 17px;
}

.tools .omega .icon {
    width: 17px;
    height: 17px;
    stroke-width: 1.7;
}

/* context menu */
.context-menu {
    position: absolute;
    left: 65px;
    top: 271px;
    width: 252px;
    height: 116px;
    border: 1px solid #d3dcd8;
    background-color: #fff;
    box-shadow: 1px 1px 2px rgba(0, 0, 0, 0.12);
}

.item {
    display: flex;
    align-items: center;
    height: 26.500px;
    padding: 1px 14px 0 8px;
}

.item .icon {
    width: 17px;
    height: 17px;
    margin-right: 8px;
}

.item kbd {
    margin-left: auto;
    font-family: inherit;
    font-size: 13.5px;
    color: #868c98;
}

.item.off kbd {
    color: #b0b2b7;
}

.cell-format {
    padding-top: 0;
    padding-right: 12px;
}

.hover {
    background-color: #e7eaee;
}

.context-menu hr {
    height: 1px;
    margin: 4px 0;
    border: 0;
    background-color: #e6e8ec;
}

.arrow {
    position: absolute;
    left: 209px;
    top: 373px;
    width: 112px;
    height: 184px;
}

/* watermark */
.watermark {
    position: absolute;
    left: 1226px;
    top: 692px;
    width: 300px;
    color: rgba(255, 255, 255, 0.75);
    font-family: "Inter", "Noto Sans CJK SC", sans-serif;
    filter: drop-shadow(0 0 1px #9fb5a2);
}

.brand {
    display: flex;
    align-items: flex-end;
    height: 92px;
}

.bai {
    width: 98px;
    font-size: 66px;
    font-weight: 800;
    line-height: 54px;
    letter-spacing: -1px;
}

.brand svg {
    width: 86px;
    height: 94px;
    fill: rgba(255, 255, 255, 0.75);
}

.brand text {
    fill: #bfd6c2;
    font-size: 42px;
    font-weight: 600;
    letter-spacing: -2px;
}

.jy {
    margin-left: 1px;
    font-size: 48px;
    font-weight: 900;
    line-height: 54px;
}

.url {
    font-family: "Noto Sans", sans-serif;
    font-size: 33px;
    line-height: 44px;
}
```
